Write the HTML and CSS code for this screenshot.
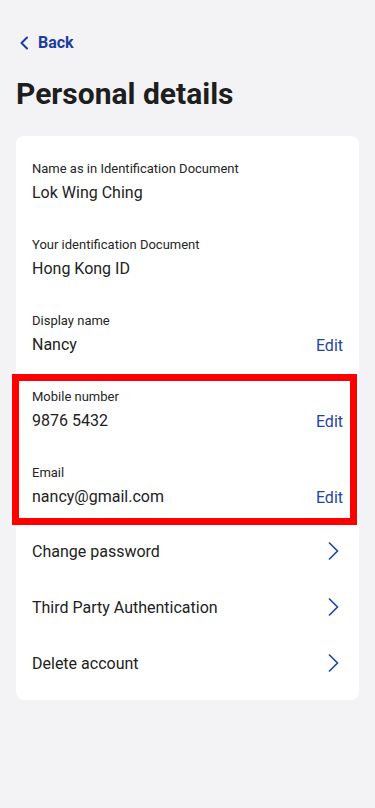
FILE: index.html
```html
<!DOCTYPE html>
<html lang="en">
<head>
    <meta charset="UTF-8">
    <meta name="viewport" content="width=device-width, initial-scale=1.0">
    <title>Personal details</title>
    <link rel="stylesheet" href="styles.css">
</head>
<body>
    <header class="top-bar">
        <a class="back-link" href="#">
            <svg class="back-icon" width="12" height="16" viewBox="0 0 12 16">
                <path d="M9 2.5 L3.5 8 L9 13.5" fill="none" stroke="currentColor" stroke-width="2" stroke-linecap="round" stroke-linejoin="round"/>
            </svg>
            <span>Back</span>
        </a>
    </header>

    <main>
        <h1>Personal details</h1>

        <section class="card">
            <div class="fields">
                <div class="field">
                    <p class="field-label">Name as in Identification Document</p>
                    <div class="field-row">
                        <span class="field-value">Lok Wing Ching</span>
                    </div>
                </div>
                <div class="field">
                    <p class="field-label">Your identification Document</p>
                    <div class="field-row">
                        <span class="field-value">Hong Kong ID</span>
                    </div>
                </div>
                <div class="field">
                    <p class="field-label">Display name</p>
                    <div class="field-row">
                        <span class="field-value">Nancy</span>
                        <a class="edit-link" href="#">Edit</a>
                    </div>
                </div>

                <div class="highlight-group">
                    <div class="highlight-box"></div>
                    <div class="field">
                        <p class="field-label">Mobile number</p>
                        <div class="field-row">
                            <span class="field-value">9876 5432</span>
                            <a class="edit-link" href="#">Edit</a>
                        </div>
                    </div>
                    <div class="field">
                        <p class="field-label">Email</p>
                        <div class="field-row">
                            <span class="field-value">nancy@gmail.com</span>
                            <a class="edit-link" href="#">Edit</a>
                        </div>
                    </div>
                </div>
            </div>

            <ul class="nav-rows">
                <li>
                    <a href="#">
                        <span>Change password</span>
                        <svg class="chevron" width="24" height="24" viewBox="0 0 24 24"><path d="M10 3.5 L18.5 12 L10 20.5" fill="none" stroke="currentColor" stroke-width="1.6"/></svg>
                    </a>
                </li>
                <li>
                    <a href="#">
                        <span>Third Party Authentication</span>
                        <svg class="chevron" width="24" height="24" viewBox="0 0 24 24"><path d="M10 3.5 L18.5 12 L10 20.5" fill="none" stroke="currentColor" stroke-width="1.6"/></svg>
                    </a>
                </li>
                <li>
                    <a href="#">
                        <span>Delete account</span>
                        <svg class="chevron" width="24" height="24" viewBox="0 0 24 24"><path d="M10 3.5 L18.5 12 L10 20.5" fill="none" stroke="currentColor" stroke-width="1.6"/></svg>
                    </a>
                </li>
            </ul>
        </section>
    </main>
</body>
</html>
```

FILE: styles.css
```css
:root {
    --bg-color: #f3f3f6;
    --text-color: #222222;
    --link-color: #1f45a6;
    --back-color: #1a3d9e;
}

* {
    margin: 0;
    padding: 0;
    box-sizing: border-box;
}

body {
    font-family: Roboto, 'Noto Sans', Arial, sans-serif;
    color: var(--text-color);
    background-color: var(--bg-color);
    min-height: 808px;
}

a {
    text-decoration: none;
    color: inherit;
}

.top-bar {
    padding: 33px 16px 0;
    height: 64px;
}

.back-link {
    display: inline-flex;
    align-items: center;
    gap: 8px;
    color: var(--back-color);
    font-size: 16px;
    font-weight: 700;
    line-height: 20px;
    padding-left: 2px;
}

.back-icon {
    display: block;
}

main {
    padding: 0 16px;
}

h1 {
    font-size: 30px;
    font-weight: 700;
    line-height: 36px;
    color: #1e1e1e;
    margin-top: 12px;
    margin-bottom: 24px;
}

.card {
    background-color: white;
    border-radius: 8px;
    padding: 25px 16px 9px;
}

.fields {
    display: flex;
    flex-direction: column;
    gap: 32px;
}

.field-label {
    font-size: 13px;
    line-height: 16px;
    color: #262626;
}

.field-row {
    display: flex;
    justify-content: space-between;
    align-items: center;
    margin-top: 4px;
    height: 24px;
}

.field-value {
    font-size: 16px;
    line-height: 24px;
}

.edit-link {
    font-size: 16px;
    color: var(--link-color);
}

.highlight-group {
    position: relative;
    display: flex;
    flex-direction: column;
    gap: 32px;
}

/* red annotation frame drawn over the mobile/email block */
.highlight-box {
    position: absolute;
    top: -15px;
    bottom: -16px;
    left: -20px;
    right: -14px;
    border: 7px solid #ff0000;
    pointer-events: none;
}

.nav-rows {
    list-style: none;
    margin-top: 14px;
}

.nav-rows a {
    display: flex;
    justify-content: space-between;
    align-items: center;
    height: 56px;
    font-size: 16px;
}

.chevron {
    display: block;
    color: var(--link-color);
}
```
